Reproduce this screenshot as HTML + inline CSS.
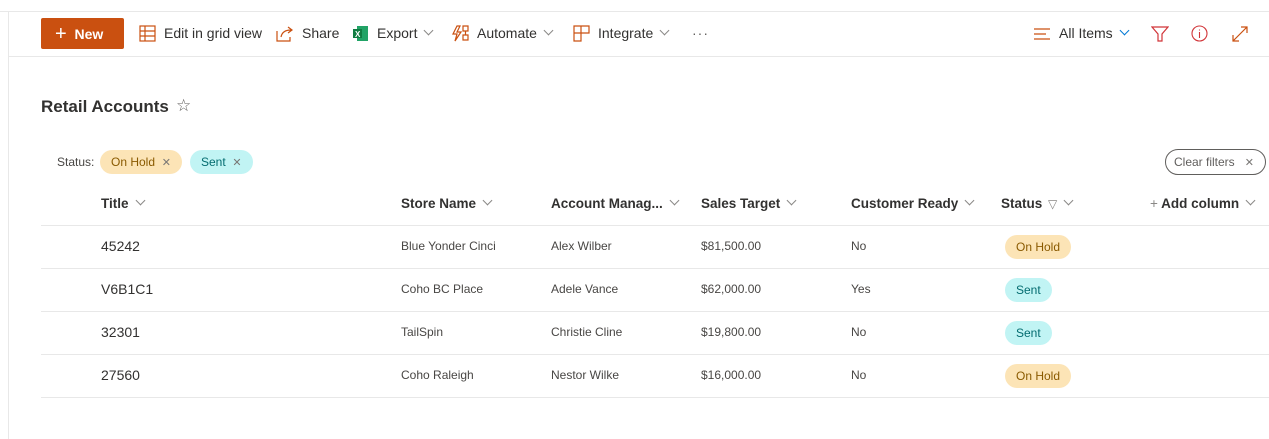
<!DOCTYPE html>
<html><head><meta charset="utf-8"><style>
*{box-sizing:border-box;margin:0;padding:0}
body{width:1269px;height:439px;overflow:hidden;background:#fff;font-family:"Liberation Sans",sans-serif;color:#323130;position:relative}
.a{position:absolute;white-space:nowrap}
.hl{position:absolute;height:1px;background:#e8e8e8}
.cmd{font-size:14px;color:#323130;top:25px}
.chev{display:inline-block;width:7px;height:7px;border-right:1px solid #8a8886;border-bottom:1px solid #8a8886;transform:rotate(45deg);margin-left:8px;position:relative;top:-4px}
.hd{font-size:13.5px;font-weight:bold;color:#323130;top:196px}
.c{font-size:12px;color:#484644}
.t{font-size:14px;color:#323130}
.pill{position:absolute;height:24px;border-radius:12px;font-size:12px;line-height:24px;padding:0 11px}
.oh{background:#fce4b6;color:#8a5a00}
.se{background:#c1f4f4;color:#036c70}
.x{color:#797775;font-size:11px}
</style></head><body>
<div class="hl" style="left:0;top:11px;width:1269px"></div>
<div style="position:absolute;left:8px;top:12px;width:1px;height:427px;background:#e8e8e8"></div>
<div class="hl" style="left:9px;top:56px;width:1260px"></div>

<div class="a" style="left:41px;top:18px;width:83px;height:31px;background:#ca5010;border-radius:2px;color:#fff;font-size:14px;font-weight:bold;line-height:31px;padding-left:14px"><span style="font-size:20px;font-weight:normal;position:relative;top:1px">+</span>&nbsp; New</div>

<svg class="a" style="left:139px;top:25px" width="17" height="17" viewBox="0 0 17 17" fill="none" stroke="#ca5010" stroke-width="1.2"><rect x="1" y="1" width="15" height="15"/><path d="M1 6h15M1 11h15M6 1v15"/></svg>
<div class="a cmd" style="left:164px">Edit in grid view</div>
<svg class="a" style="left:276px;top:25px" width="18" height="17" viewBox="0 0 18 17" fill="none" stroke="#ca5010" stroke-width="1.2"><path d="M1 6v10h13v-4M5 12c1-5 5-7 10-7M12 2l4 3-4 3"/></svg>
<div class="a cmd" style="left:302px">Share</div>
<svg class="a" style="left:352px;top:25px" width="17" height="17" viewBox="0 0 17 17"><rect x="5" y="1" width="11" height="15" fill="#21a366"/><rect x="1" y="4" width="9" height="9" fill="#107c41"/><text x="3" y="12" font-size="8" fill="#fff" font-family="Liberation Sans" font-weight="bold">X</text></svg>
<div class="a cmd" style="left:377px">Export<span class="chev"></span></div>
<svg class="a" style="left:452px;top:25px" width="18" height="17" viewBox="0 0 18 17" fill="none" stroke="#ca5010" stroke-width="1.2"><path d="M5 1L1 9h4l-2 7 6-9H5l3-6zM11 1h5v5h-5zM11 10h5v5h-5zM13.5 6v4"/></svg>
<div class="a cmd" style="left:477px">Automate<span class="chev"></span></div>
<svg class="a" style="left:573px;top:25px" width="17" height="17" viewBox="0 0 17 17" fill="none" stroke="#ca5010" stroke-width="1.2"><path d="M1 1h15v7H8v8H1zM8 1v7M1 8h7"/></svg>
<div class="a cmd" style="left:598px">Integrate<span class="chev"></span></div>
<div class="a" style="left:692px;top:25px;font-size:14px;color:#605e5c;letter-spacing:1px">···</div>

<svg class="a" style="left:1033px;top:28px" width="18" height="12" viewBox="0 0 18 12" stroke="#ca5010" stroke-width="1.2"><path d="M1 1h16M1 6h12M1 11h16"/></svg>
<div class="a cmd" style="left:1059px">All Items<span class="chev" style="border-color:#0078d4"></span></div>
<svg class="a" style="left:1151px;top:26px" width="18" height="16" viewBox="0 0 18 16" fill="none" stroke="#d13438" stroke-width="1.2"><path d="M1 1h16l-6 7v7H7V8z"/></svg>
<svg class="a" style="left:1191px;top:25px" width="17" height="17" viewBox="0 0 17 17" fill="none" stroke="#d13438" stroke-width="1.1"><circle cx="8.5" cy="8.5" r="7.5"/><path d="M8.5 7v6M8.5 4.5v1"/></svg>
<svg class="a" style="left:1232px;top:26px" width="16" height="16" viewBox="0 0 16 16" fill="none" stroke="#ca5010" stroke-width="1.2"><path d="M1 15L15 1M9 1h6v6M1 9v6h6"/></svg>

<div class="a" style="left:41px;top:97px;font-size:17px;font-weight:bold;color:#323130">Retail Accounts</div>
<div class="a" style="left:176px;top:96px;font-size:17px;color:#605e5c">☆</div>

<div class="a" style="left:57px;top:155px;font-size:12px;color:#484644">Status:</div>
<div class="pill oh" style="left:100px;top:150px">On Hold&nbsp;&nbsp;<span class="x">✕</span></div>
<div class="pill se" style="left:190px;top:150px">Sent&nbsp;&nbsp;<span class="x">✕</span></div>
<div class="a" style="left:1165px;top:149px;width:101px;height:26px;border:1px solid #605e5c;border-radius:13px;font-size:12px;color:#605e5c;line-height:24px;padding-left:8px">Clear filters&nbsp;&nbsp;&nbsp;<span class="x">✕</span></div>

<div class="a hd" style="left:101px">Title<span class="chev"></span></div>
<div class="a hd" style="left:401px">Store Name<span class="chev"></span></div>
<div class="a hd" style="left:551px">Account Manag...<span class="chev"></span></div>
<div class="a hd" style="left:701px">Sales Target<span class="chev"></span></div>
<div class="a hd" style="left:851px">Customer Ready<span class="chev"></span></div>
<div class="a hd" style="left:1001px">Status <span style="font-weight:normal;color:#8a8886;font-size:12px;margin-left:2px">▽</span><span class="chev"></span></div>
<div class="a hd" style="left:1150px"><span style="font-weight:normal;color:#8a8886">+</span> Add column<span class="chev"></span></div>

<div class="hl" style="left:41px;top:225px;width:1228px"></div>
<div class="hl" style="left:41px;top:268px;width:1228px"></div>
<div class="hl" style="left:41px;top:311px;width:1228px"></div>
<div class="hl" style="left:41px;top:354px;width:1228px"></div>
<div class="hl" style="left:41px;top:397px;width:1228px"></div>

<div class="a t" style="left:101px;top:238px">45242</div>
<div class="a c" style="left:401px;top:239px">Blue Yonder Cinci</div>
<div class="a c" style="left:551px;top:239px">Alex Wilber</div>
<div class="a c" style="left:701px;top:239px">$81,500.00</div>
<div class="a c" style="left:851px;top:239px">No</div>
<div class="pill oh" style="left:1005px;top:235px">On Hold</div>

<div class="a t" style="left:101px;top:281px">V6B1C1</div>
<div class="a c" style="left:401px;top:282px">Coho BC Place</div>
<div class="a c" style="left:551px;top:282px">Adele Vance</div>
<div class="a c" style="left:701px;top:282px">$62,000.00</div>
<div class="a c" style="left:851px;top:282px">Yes</div>
<div class="pill se" style="left:1005px;top:278px">Sent</div>

<div class="a t" style="left:101px;top:324px">32301</div>
<div class="a c" style="left:401px;top:325px">TailSpin</div>
<div class="a c" style="left:551px;top:325px">Christie Cline</div>
<div class="a c" style="left:701px;top:325px">$19,800.00</div>
<div class="a c" style="left:851px;top:325px">No</div>
<div class="pill se" style="left:1005px;top:321px">Sent</div>

<div class="a t" style="left:101px;top:367px">27560</div>
<div class="a c" style="left:401px;top:368px">Coho Raleigh</div>
<div class="a c" style="left:551px;top:368px">Nestor Wilke</div>
<div class="a c" style="left:701px;top:368px">$16,000.00</div>
<div class="a c" style="left:851px;top:368px">No</div>
<div class="pill oh" style="left:1005px;top:364px">On Hold</div>
</body></html>
